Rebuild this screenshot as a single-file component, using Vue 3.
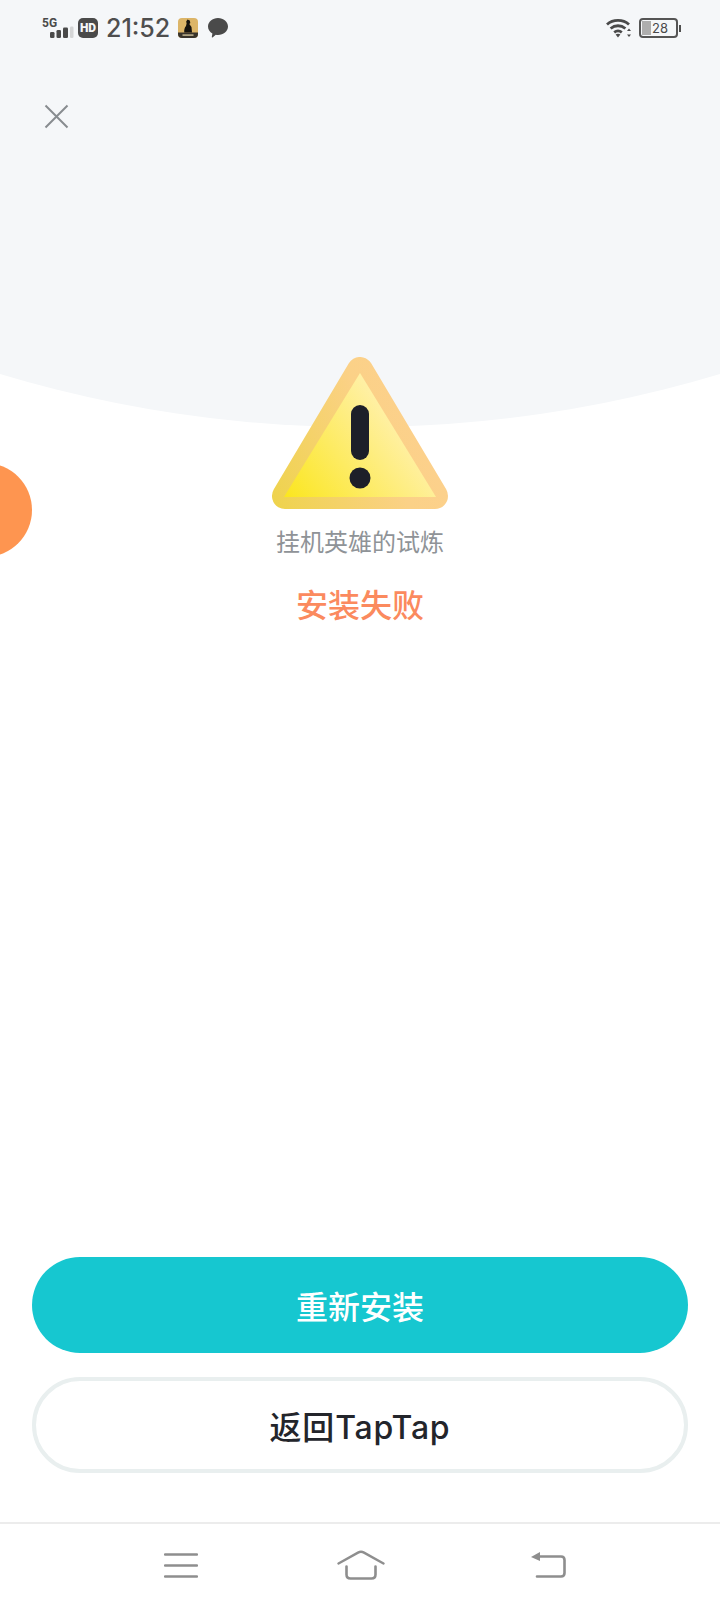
<script setup>
const time = '21:52'
</script>

<template>
  <div class="page">
    <div class="dome"></div>
    <div class="blob"></div>

    <header class="status">
      <div class="status-left">
        <div class="signal">
          <span class="net">5G</span>
          <svg class="bars" width="24" height="12" viewBox="0 0 24 12">
            <rect x="0" y="6" width="4.500" height="6" rx="1.300" fill="#4a4a4a" />
            <rect x="6.500" y="4" width="4.500" height="8" rx="1.300" fill="#4a4a4a" />
            <rect x="13" y="1.500" width="5" height="10.500" rx="1.300" fill="#4a4a4a" />
            <rect x="20" y="0.500" width="3.500" height="11.500" rx="1.200" fill="#d4d5d6" />
          </svg>
        </div>
        <span class="hd">HD</span>
        <span class="time">{{ time }}</span>
        <svg class="app" width="20" height="20" viewBox="0 0 20 20">
          <rect width="20" height="20" rx="4" fill="#dcb568" />
          <path d="M0 14.500h20V16a4 4 0 0 1-4 4H4a4 4 0 0 1-4-4z" fill="#38332b" />
          <path d="M9.500 1.500l2.300 1 .5 2.500-1 1 2.200 3 .5 5.500H6.300c-.4-2.500.3-5 1.700-6.500l.6-2.500-.4-2z" fill="#15120e" />
          <rect x="4.500" y="16.300" width="11" height="1.600" fill="#bcae8c" />
        </svg>
        <svg class="bubble" width="20" height="20" viewBox="0 0 20 20">
          <path d="M10 0c5.500 0 10 3.700 10 8.500S15.500 17 10 17c-.8 0-1.500-.1-2.200-.2L4.500 19.400c-.4.300-.8 0-.7-.4l.6-3.400C1.800 14.100 0 11.500 0 8.500 0 3.700 4.500 0 10 0z" fill="#4a4a4a" />
        </svg>
      </div>
      <div class="status-right">
        <svg class="wifi" width="26" height="20" viewBox="0 0 26 20">
          <path d="M1 6.500C7 1 17 1 23 6.500" fill="none" stroke="#4a4a4a" stroke-width="2.800" />
          <path d="M4.600 10.500C9 6.800 15 6.800 19.400 10.500" fill="none" stroke="#4a4a4a" stroke-width="2.800" />
          <path d="M8.200 14.300C10.800 12.300 13.200 12.300 15.800 14.300" fill="none" stroke="#4a4a4a" stroke-width="2.800" />
          <path d="M12 19.500l-2.400-3c1.500-.9 3.300-.9 4.800 0z" fill="#4a4a4a" />
          <path d="M23 10.500l2 2.600h-4zM23 19l-2-2.600h4z" fill="#4a4a4a" />
        </svg>
        <div class="battery">
          <span class="level"></span>
          <span class="pct">28</span>
        </div>
        <span class="nub"></span>
      </div>
    </header>

    <div class="topbar">
      <svg width="25" height="25" viewBox="0 0 25 25">
        <path d="M1.500 1.500l22 22M23.500 1.500l-22 22" fill="none" stroke="#878c90" stroke-width="2" />
      </svg>
    </div>

    <main class="hero">
      <svg class="warn" width="178" height="154" viewBox="0 0 178 154">
        <defs>
          <linearGradient id="outer" gradientUnits="userSpaceOnUse" x1="0" y1="150" x2="178" y2="70">
            <stop offset="0" stop-color="#eed34a" />
            <stop offset="0.65" stop-color="#fbd187" />
            <stop offset="1" stop-color="#fdd08f" />
          </linearGradient>
          <linearGradient id="inner" gradientUnits="userSpaceOnUse" x1="14" y1="140" x2="120" y2="60">
            <stop offset="0" stop-color="#fbe61f" />
            <stop offset="1" stop-color="#fff0a4" />
          </linearGradient>
        </defs>
        <path d="M89 13L14 139H164z" fill="url(#outer)" stroke="url(#outer)" stroke-width="26" stroke-linejoin="round" />
        <path d="M89 16L13 140H165z" fill="url(#inner)" />
        <rect x="80" y="48" width="18" height="55" rx="9" fill="#1d1f29" />
        <circle cx="89" cy="121" r="10.500" fill="#1d1f29" />
      </svg>
      <p class="game">挂机英雄的试炼</p>
      <p class="state">安装失败</p>
    </main>

    <section class="actions">
      <button class="btn primary">重新安装</button>
      <button class="btn secondary">返回TapTap</button>
    </section>

    <nav class="nav">
      <svg width="34" height="26" viewBox="0 0 34 26">
        <path d="M1 2.500h32M1 13.500h32M1 24.500h32" fill="none" stroke="#8e8e8e" stroke-width="2.400" stroke-linecap="round" />
      </svg>
      <svg class="home" width="48" height="30" viewBox="0 0 48 30">
        <path d="M1.500 13.500L21 2.600c2-1.100 4-1.100 6 0l19.500 10.900" fill="none" stroke="#8e8e8e" stroke-width="2.400" stroke-linecap="round" />
        <path d="M9.500 16.500v8c0 2.500 1.500 4 4 4h21c2.500 0 4-1.500 4-4v-8" fill="none" stroke="#8e8e8e" stroke-width="2.600" stroke-linecap="round" />
      </svg>
      <svg class="back" width="36" height="28" viewBox="0 0 36 28">
        <path d="M1 6l9-5v9z" fill="#8e8e8e" />
        <path d="M8 5.500h23c2.500 0 3.500 1.200 3.500 3.500v13c0 2.300-1 3.500-3.500 3.500H7" fill="none" stroke="#8e8e8e" stroke-width="2.600" stroke-linecap="round" />
      </svg>
    </nav>
  </div>
</template>

<style scoped>
.page {
  position: relative;
  width: 720px;
  height: 1605px;
  overflow: hidden;
  background: #fff;
  display: flex;
  flex-direction: column;
  font-family: "Inter", "Noto Sans CJK SC", sans-serif;
}
.dome {
  position: absolute;
  left: -890px;
  top: -2073px;
  width: 2500px;
  height: 2500px;
  border-radius: 50%;
  background: #f5f7f9;
}
.blob {
  position: absolute;
  left: -62px;
  top: 463px;
  width: 94px;
  height: 94px;
  border-radius: 50%;
  background: #fe9550;
}
.status {
  position: relative;
  height: 56px;
  padding: 16px 39px 0 42px;
  box-sizing: border-box;
  display: flex;
  justify-content: space-between;
  align-items: flex-start;
  color: #4a4a4a;
}
.status-left,
.status-right {
  display: flex;
  align-items: center;
  height: 24px;
}
.signal {
  position: relative;
  width: 31px;
  height: 22px;
}
.net {
  position: absolute;
  left: 0;
  top: 0;
  font: 700 12px/12px "Roboto", sans-serif;
}
.bars {
  position: absolute;
  left: 8px;
  top: 9px;
}
.hd {
  margin-left: 5px;
  width: 20px;
  height: 20px;
  border-radius: 5px;
  background: #4a4a4a;
  color: #f5f7f9;
  font: 900 12px/20px "Roboto", sans-serif;
  text-align: center;
}
.time {
  margin-left: 8px;
  font-size: 25px;
  font-weight: 500;
  line-height: 24px;
  width: 64px;
  color: #4e4e4e;
}
.app {
  margin-left: 8px;
}
.bubble {
  margin-left: 10px;
}
.wifi {
  margin-right: 7px;
}
.battery {
  position: relative;
  width: 39px;
  height: 20px;
  box-sizing: border-box;
  border: 2px solid #555;
  border-radius: 4px;
}
.level {
  position: absolute;
  left: 1px;
  top: 1px;
  bottom: 1px;
  width: 9px;
  background: #aeaeae;
}
.pct {
  position: absolute;
  left: 11px;
  top: 0;
  font-size: 13px;
  line-height: 16px;
}
.nub {
  width: 2px;
  height: 7px;
  margin-left: 1px;
  background: #4f4f4f;
}
.topbar {
  position: relative;
  height: 48px;
  margin-top: 48px;
  padding-left: 44px;
}
.hero {
  position: relative;
  margin-top: 205px;
  display: flex;
  flex-direction: column;
  align-items: center;
}
.warn {
  display: block;
}
.game {
  margin: 14px 0 0;
  font-size: 24px;
  line-height: 36px;
  color: #8f9397;
}
.state {
  margin: 23px 0 0;
  font-size: 32px;
  line-height: 44px;
  font-weight: 500;
  color: #fb8a5e;
}
.actions {
  position: relative;
  margin-top: auto;
  padding: 0 32px 49px;
  display: flex;
  flex-direction: column;
  gap: 24px;
}
.btn {
  width: 100%;
  height: 96px;
  box-sizing: border-box;
  border-radius: 48px;
  font-family: inherit;
  font-size: 32px;
  font-weight: 500;
  padding: 0;
}
.primary {
  border: 0;
  background: #16c7d0;
  color: #fff;
}
.secondary {
  background: #fff;
  border: 4px solid #e9efef;
  color: #23252b;
  letter-spacing: 0.8px;
}
.nav {
  position: relative;
  height: 83px;
  box-sizing: border-box;
  border-top: 2px solid #ececec;
  padding-left: 164px;
  display: flex;
  align-items: center;
}
.home {
  margin-left: 139px;
}
.back {
  margin-left: 145px;
}
</style>
